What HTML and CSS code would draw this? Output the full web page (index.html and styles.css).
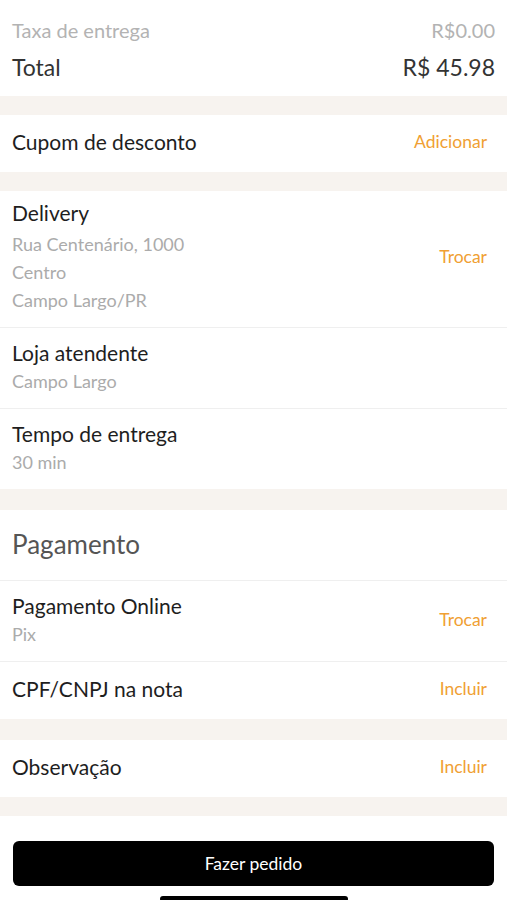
FILE: index.html
```html
<!DOCTYPE html>
<html lang="pt-BR">
  <head>
    <meta charset="UTF-8" />
    <meta name="viewport" content="width=device-width, initial-scale=1.0" />
    <title>Finalizar pedido</title>
    <link rel="stylesheet" href="styles.css">
  </head>
  <body>
    <div class="summary">
      <div class="summary-row muted">
        <span>Taxa de entrega</span>
        <span>R$0.00</span>
      </div>
      <div class="summary-row total">
        <span>Total</span>
        <span>R$ 45.98</span>
      </div>
    </div>

    <div class="spacer"></div>

    <div class="section">
      <div class="item single">
        <span class="item-title">Cupom de desconto</span>
        <a class="action">Adicionar</a>
      </div>
    </div>

    <div class="spacer"></div>

    <div class="section">
      <div class="item delivery">
        <div class="item-info">
          <span class="item-title">Delivery</span>
          <span class="item-sub">Rua Centenário, 1000</span>
          <span class="item-sub">Centro</span>
          <span class="item-sub">Campo Largo/PR</span>
        </div>
        <a class="action">Trocar</a>
      </div>
      <div class="item">
        <div class="item-info">
          <span class="item-title">Loja atendente</span>
          <span class="item-sub">Campo Largo</span>
        </div>
      </div>
      <div class="item">
        <div class="item-info">
          <span class="item-title">Tempo de entrega</span>
          <span class="item-sub">30 min</span>
        </div>
      </div>
    </div>

    <div class="spacer tall"></div>

    <div class="section">
      <div class="section-header">Pagamento</div>
      <div class="item">
        <div class="item-info">
          <span class="item-title">Pagamento Online</span>
          <span class="item-sub">Pix</span>
        </div>
        <a class="action">Trocar</a>
      </div>
      <div class="item single">
        <span class="item-title">CPF/CNPJ na nota</span>
        <a class="action">Incluir</a>
      </div>
    </div>

    <div class="spacer tall"></div>

    <div class="section">
      <div class="item single">
        <span class="item-title">Observação</span>
        <a class="action">Incluir</a>
      </div>
    </div>

    <div class="spacer"></div>

    <div class="footer">
      <button class="order-button">Fazer pedido</button>
      <div class="home-indicator"></div>
    </div>
  </body>
</html>
```

FILE: styles.css
```css
body {
  font-family: Lato, "Open Sans", sans-serif;
  margin: 0;
  background-color: #fff;
  color: #222;
}

.summary {
  height: 96px;
  box-sizing: border-box;
  padding: 14px 12px 0;
}

.summary-row {
  display: flex;
  justify-content: space-between;
  align-items: center;
}

.summary-row.muted {
  font-size: 20px;
  color: #b3b3b3;
  height: 32px;
}

.summary-row.total {
  font-size: 23px;
  color: #333;
  height: 42px;
}

.spacer {
  height: 19px;
  background-color: #f7f3ef;
}

.spacer.tall {
  height: 21px;
}

.section {
  background-color: #fff;
}

.item {
  display: flex;
  justify-content: space-between;
  align-items: center;
  padding: 10px 20px 13px 12px;
  border-bottom: 1px solid #efefef;
}

.item:last-child {
  border-bottom: none;
}

.item.single {
  height: 57px;
  box-sizing: border-box;
  padding-top: 0;
  padding-bottom: 4px;
}

.item.delivery {
  padding-top: 7px;
  padding-bottom: 13px;
}

.item.delivery .item-title {
  margin-bottom: 3px;
}

.item-info {
  display: flex;
  flex-direction: column;
}

.item-title {
  font-size: 21px;
  line-height: 29px;
  color: #1e1e1e;
}

.item-sub {
  font-size: 18px;
  line-height: 28px;
  color: #ababab;
}

.action {
  font-size: 17.5px;
  color: #f0a033;
  cursor: pointer;
}

.section-header {
  height: 71px;
  box-sizing: border-box;
  display: flex;
  align-items: center;
  padding: 0 12px 2px;
  font-size: 26px;
  color: #555;
  border-bottom: 1px solid #efefef;
}

.footer {
  padding: 25px 13px 0;
  display: flex;
  flex-direction: column;
  align-items: center;
}

.order-button {
  width: 100%;
  height: 45px;
  background-color: #000;
  color: #fff;
  border: none;
  border-radius: 6px;
  font-family: Lato, sans-serif;
  font-size: 17.5px;
  cursor: pointer;
}

.home-indicator {
  width: 188px;
  height: 6px;
  margin-top: 10px;
  background-color: #000;
  border-radius: 3px;
}
```
